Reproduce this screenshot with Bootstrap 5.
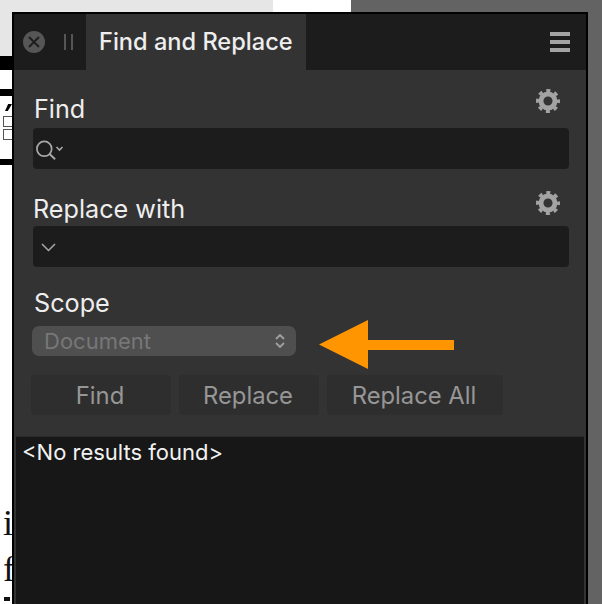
<!doctype html>
<html lang="en">
<head>
<meta charset="utf-8">
<title>Find and Replace</title>
<link href="https://cdn.jsdelivr.net/npm/bootstrap@5.3.0/dist/css/bootstrap.min.css" rel="stylesheet">
<style>
html,body{height:604px;overflow:hidden;background:#fff;font-family:Inter,"Liberation Sans",sans-serif;}
.desk{height:604px;overflow:hidden;}
.desk-left{width:273px;}
.desk-mid{width:78px;background:#fff;}
.desk-right{background:#636363;}
.band-gray{height:56px;background:#e6e6e6;}
.band-black{height:14px;background:#000;}
.band-white{height:18px;background:#fff;}
.band-thin{height:7px;background:#000;margin-top:1px;}
.band-glyphs{height:63px;background:#fff;padding:8px 0 0 3px;}
.accent{width:7px;height:7px;background:#000;clip-path:polygon(45% 0,100% 0,40% 100%,0 100%);margin-left:2px;}
.glyph-box{width:12px;height:11px;border:1px solid #555;margin-top:2px;}
.glyph-box-first{margin-top:5px;}
.band-tail{height:6px;background:#000;}
.serif-col{padding:335px 0 0 3px;font:36px/46px "Liberation Serif",serif;color:#111;}
.sliver{width:6px;height:4px;background:#111;margin:5px 0 0 4px;}
.panel-win{position:absolute;left:12px;top:12px;width:576px;height:592px;background:#333;border:solid #000;border-width:2px 2px 0;overflow:hidden;}
.tabbar{height:56px;background:#1c1c1c;}
.close-dot{width:22px;height:22px;margin-left:9px;}
.grip{width:9px;height:16px;margin-left:19px;margin-right:13px;border:solid #555;border-width:0 2px;}
.tab-active{width:220px;background:#333;color:#eee;font-size:23.6px;font-weight:500;padding-left:13px;line-height:56px;}
.menu-icon{margin-right:16px;}
.menu-icon span{display:block;width:20px;height:4px;background:#a3a3a3;margin-bottom:4px;}
.menu-icon span:last-child{margin-bottom:0;}
.form-area{height:364px;padding:0 17px 0 19px;color:#eee;}
.label-row{font-size:25.2px;line-height:30px;}
.label-find{padding:24px 9px 0 1px;height:58px;}
.label-replace{padding:0 9px 0 0;height:32px;margin-top:25px;}
.label-scope{padding-left:1px;height:30px;margin-top:21px;}
.gear{width:24px;height:24px;}
.gear-find{margin-top:-5px;}
.gear-replace{margin-top:-3px;}
.field-dark{height:41px;background:#1c1c1c;border-radius:4px;padding-left:3px;}
.scope-select{width:264px;height:30px;margin:8px 0 0 -1px;background:#4f4f4f;border-radius:7px;color:#777;font-size:22px;padding:0 11px 0 12px;}
.act-row{margin:19px 0 0 -2px;gap:8px;}
.act-btn{height:40px;background:#2e2e2e;color:#969696;font-size:23.8px;border:0;border-radius:4px;padding:2px 2px 0 0;--bs-btn-color:#969696;}
.act-find,.act-replace{width:140px;}
.act-all{width:176px;}
.results-pane{margin:2px 2px 0;height:168px;padding:2px 6px;background:#171717;color:#f2f2f2;font-size:22px;line-height:26px;border-top:1px solid #2a2a2a;}
.call-arrow{position:absolute;left:319px;top:320px;}
</style>
</head>
<body class="m-0">
<div class="desk d-flex">
  <div class="desk-left">
    <div class="band-gray"></div>
    <div class="band-black"></div>
    <div class="band-white"></div>
    <div class="band-thin"></div>
    <div class="band-glyphs">
      <div class="accent"></div>
      <div class="glyph-box glyph-box-first"></div>
      <div class="glyph-box"></div>
    </div>
    <div class="band-tail"></div>
    <div class="serif-col">i<br>f</div>
    <div class="sliver"></div>
  </div>
  <div class="desk-mid"></div>
  <div class="desk-right flex-grow-1"></div>
</div>

<div class="panel-win d-flex flex-column">
  <div class="tabbar d-flex align-items-stretch flex-shrink-0">
    <div class="d-flex align-items-center">
      <svg class="close-dot" viewBox="0 0 22 22"><circle cx="11" cy="11" r="11" fill="#565656"/><path d="M6 6l10 10M16 6L6 16" stroke="#1f1f1f" stroke-width="2"/></svg>
      <div class="grip"></div>
    </div>
    <div class="tab-active">Find and Replace</div>
    <div class="ms-auto d-flex align-items-center menu-icon"><div><span></span><span></span><span></span></div></div>
  </div>

  <div class="form-area flex-shrink-0">
    <div class="label-row label-find d-flex justify-content-between">
      <span>Find</span>
      <svg class="gear gear-find" viewBox="0 0 24 24" fill="none" stroke="#a3a3a3"><circle cx="12" cy="12" r="7" stroke-width="4.900"/><circle cx="12" cy="12" r="10.500" stroke-width="3" stroke-dasharray="4.100 4.147" stroke-dashoffset="2.050"/></svg>
    </div>
    <div class="field-dark d-flex align-items-center">
      <svg width="28" height="24" viewBox="0 0 28 24" fill="none" stroke="#a8a8a8"><circle cx="8.300" cy="11.800" r="7.400" stroke-width="1.700"/><path d="M13.600 17l5.500 5.300" stroke-width="1.900"/><path d="M20.500 10l3 3 3-3" stroke-width="1.600"/></svg>
    </div>
    <div class="label-row label-replace d-flex justify-content-between">
      <span>Replace with</span>
      <svg class="gear gear-replace" viewBox="0 0 24 24" fill="none" stroke="#a3a3a3"><circle cx="12" cy="12" r="7" stroke-width="4.900"/><circle cx="12" cy="12" r="10.500" stroke-width="3" stroke-dasharray="4.100 4.147" stroke-dashoffset="2.050"/></svg>
    </div>
    <div class="field-dark d-flex align-items-center">
      <svg class="ms-1" width="16" height="12" viewBox="0 0 16 12" fill="none" stroke="#a8a8a8" stroke-width="1.500"><path d="M2 3l6.500 6.500L15 3"/></svg>
    </div>
    <div class="label-row label-scope">Scope</div>
    <div class="scope-select d-flex align-items-center justify-content-between">
      <span>Document</span>
      <svg width="10" height="16" viewBox="0 0 10 16" fill="none" stroke="#a0a0a0" stroke-width="1.800"><path d="M1 6l4-4 4 4M1 10l4 4 4-4"/></svg>
    </div>
    <div class="act-row d-flex">
      <button type="button" class="btn act-btn act-find">Find</button>
      <button type="button" class="btn act-btn act-replace">Replace</button>
      <button type="button" class="btn act-btn act-all">Replace All</button>
    </div>
  </div>

  <div class="results-pane flex-grow-1">&lt;No results found&gt;</div>
</div>

<svg class="call-arrow" width="136" height="50" viewBox="0 0 136 50"><path d="M0 24.500L49 0v20h86v10H49v19z" fill="#ff9500"/></svg>
</body>
</html>
